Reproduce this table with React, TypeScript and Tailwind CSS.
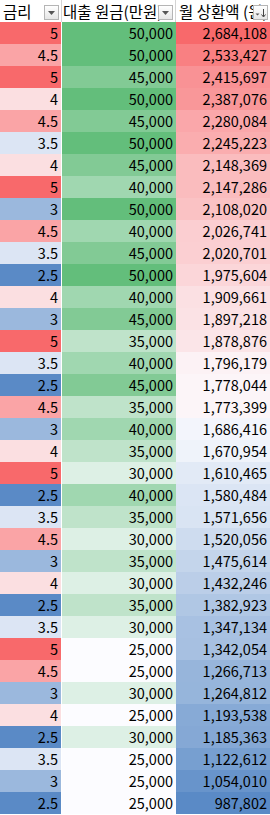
import React from "react"

type Row = [number, number, number]

const rows: Row[] = [
    [5, 50000, 2684108],
    [4.5, 50000, 2533427],
    [5, 45000, 2415697],
    [4, 50000, 2387076],
    [4.5, 45000, 2280084],
    [3.5, 50000, 2245223],
    [4, 45000, 2148369],
    [5, 40000, 2147286],
    [3, 50000, 2108020],
    [4.5, 40000, 2026741],
    [3.5, 45000, 2020701],
    [2.5, 50000, 1975604],
    [4, 40000, 1909661],
    [3, 45000, 1897218],
    [5, 35000, 1878876],
    [3.5, 40000, 1796179],
    [2.5, 45000, 1778044],
    [4.5, 35000, 1773399],
    [3, 40000, 1686416],
    [4, 35000, 1670954],
    [5, 30000, 1610465],
    [2.5, 40000, 1580484],
    [3.5, 35000, 1571656],
    [4.5, 30000, 1520056],
    [3, 35000, 1475614],
    [4, 30000, 1432246],
    [2.5, 35000, 1382923],
    [3.5, 30000, 1347134],
    [5, 25000, 1342054],
    [4.5, 25000, 1266713],
    [3, 30000, 1264812],
    [4, 25000, 1193538],
    [2.5, 30000, 1185363],
    [3.5, 25000, 1122612],
    [3, 25000, 1054010],
    [2.5, 25000, 987802],
]

const RED = [248, 105, 107]
const WHITE = [252, 252, 255]
const BLUE = [90, 138, 198]
const GREEN = [99, 190, 123]

const mix = (a: number[], b: number[], t: number) =>
    `rgb(${a.map((v, i) => Math.round(v + (b[i] - v) * t)).join(",")})`

const median = (vals: number[]) => {
    const s = [...vals].sort((a, b) => a - b)
    const m = s.length / 2
    return s.length % 2 ? s[Math.floor(m)] : (s[m - 1] + s[m]) / 2
}

// excel style 3-colour scale: min blue, median white, max red
const threeScale = (vals: number[]) => {
    const min = Math.min(...vals)
    const max = Math.max(...vals)
    const mid = median(vals)
    return (v: number) =>
        v >= mid ? mix(WHITE, RED, (v - mid) / (max - mid)) : mix(WHITE, BLUE, (mid - v) / (mid - min))
}

const rateColor = threeScale(rows.map((r) => r[0]))
const payColor = threeScale(rows.map((r) => r[2]))
const principalColor = (v: number) => mix(WHITE, GREEN, (v - 25000) / 25000)

const fmt = (n: number) => n.toLocaleString("en-US")

const FilterButton: React.FC<{ sorted?: boolean }> = ({ sorted }) => (
    <span className="absolute top-[5px] right-[2px] flex h-[15px] w-[15px] items-center justify-center border border-[#b5b5b5] bg-gradient-to-b from-white to-[#e6e6e6]">
        {sorted ? (
            <svg width="13" height="13" viewBox="0 0 13 13">
                <path d="M1.5 7.5h4l-2 2z" fill="#555" />
                <path d="M9.5 3v7.5" stroke="#444" strokeWidth="1" />
                <path d="M7.5 8.5l2 2.5 2-2.5" stroke="#444" strokeWidth="1" fill="none" />
            </svg>
        ) : (
            <svg width="13" height="13" viewBox="0 0 13 13">
                <path d="M3 5h7l-3.5 4z" fill="#555" />
            </svg>
        )}
    </span>
)

export default function App() {
    return (
        <div className="w-[270px] h-[815px] overflow-hidden bg-white text-black [font-family:'Noto_Sans_CJK_KR','Noto_Sans',sans-serif] text-[14.5px] leading-[22px]">
            <div className="flex h-[22px] bg-white text-[15.5px]">
                <div className="relative w-[61px] overflow-hidden whitespace-nowrap pl-[3px]">
                    금리
                    <FilterButton />
                </div>
                <div className="w-px bg-[#d4d4d4]" />
                <div className="relative w-[113px] overflow-hidden whitespace-nowrap pl-[1px]">
                    대출 원금(만원)
                    <FilterButton />
                </div>
                <div className="w-px bg-[#d4d4d4]" />
                <div className="relative flex-1 overflow-hidden whitespace-nowrap pl-[3px]">
                    월 상환액 (원)
                    <FilterButton sorted />
                </div>
            </div>
            {rows.map(([rate, principal, pay], i) => (
                <div key={i} className="flex h-[22px]">
                    <div className="w-[61px] pr-[3px] text-right" style={{ backgroundColor: rateColor(rate) }}>
                        {rate}
                    </div>
                    <div className="w-px bg-white" />
                    <div className="w-[114px] pr-[3px] text-right" style={{ backgroundColor: principalColor(principal) }}>
                        {fmt(principal)}
                    </div>
                    <div className="flex-1 pr-[3px] text-right" style={{ backgroundColor: payColor(pay) }}>
                        {fmt(pay)}
                    </div>
                </div>
            ))}
        </div>
    )
}
